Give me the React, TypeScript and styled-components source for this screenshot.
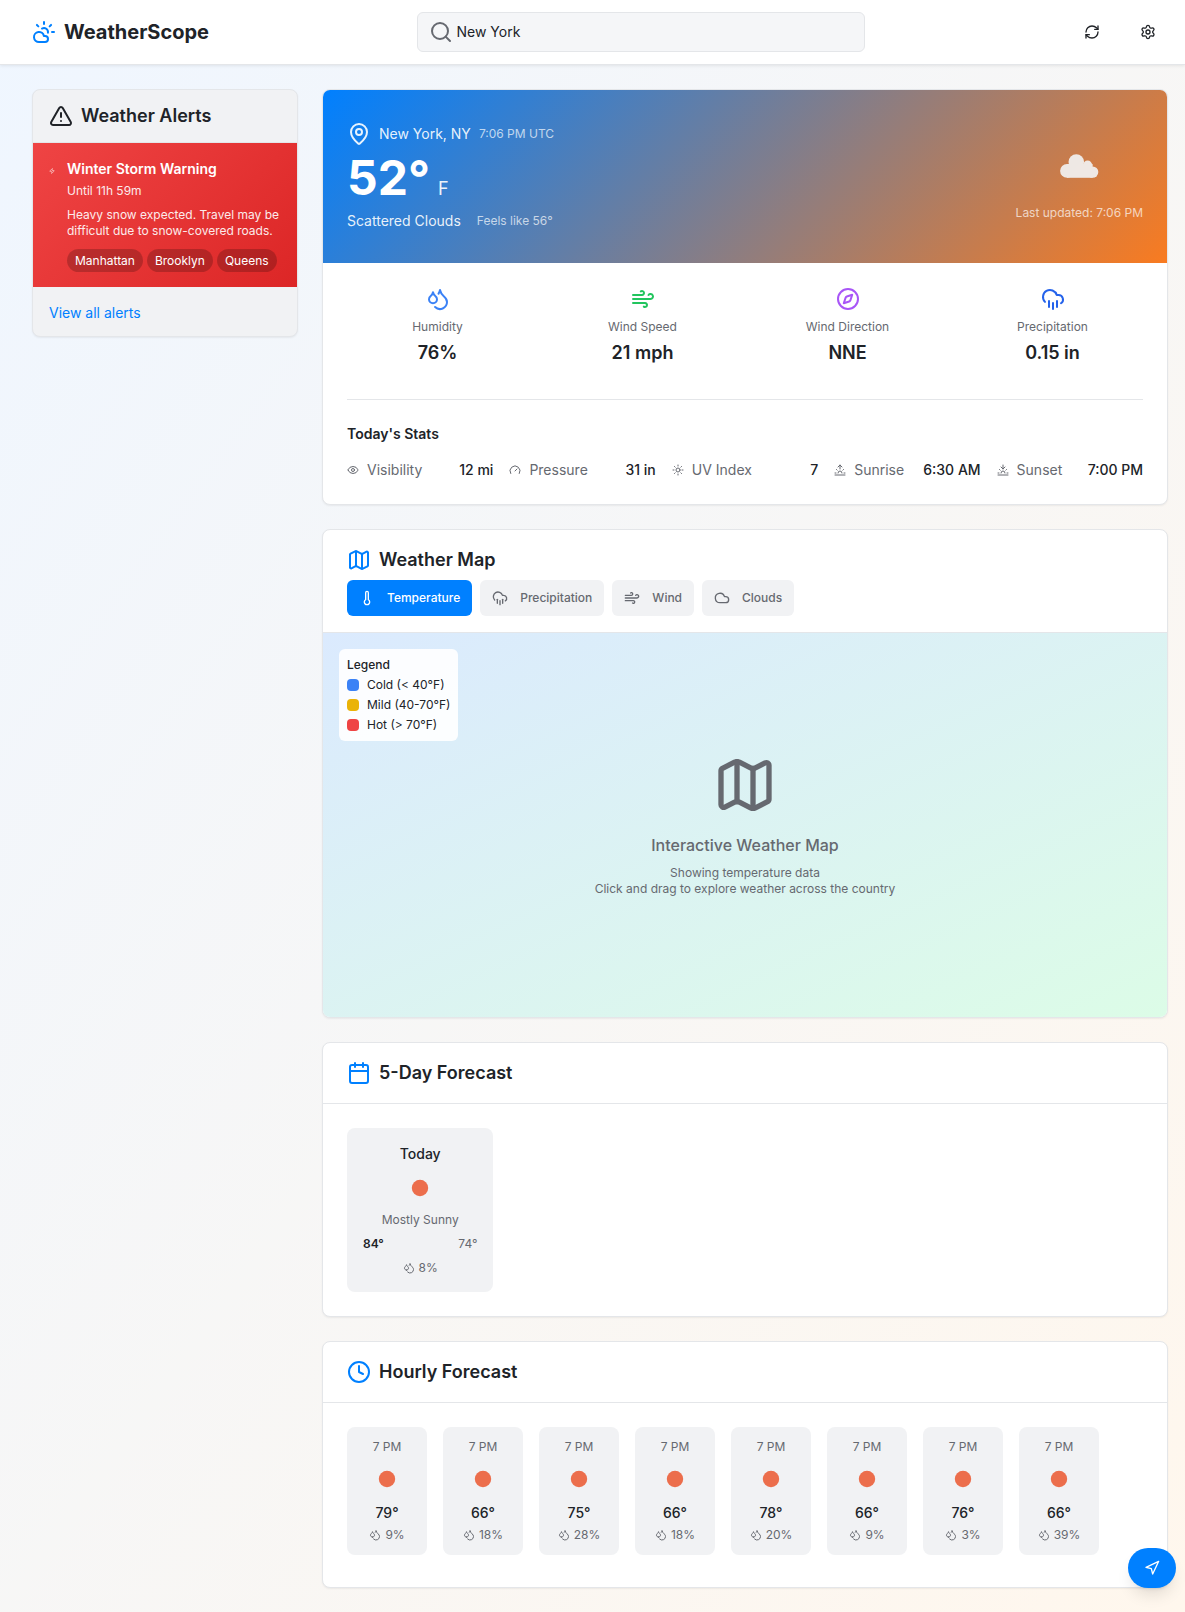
import React from "react";
import styled, { createGlobalStyle } from "styled-components";
import {
  Calendar,
  Clock,
  Cloud,
  CloudRain,
  CloudSun,
  Compass,
  Droplets,
  Eye,
  Gauge,
  Map as MapIcon,
  MapPin,
  Navigation,
  RefreshCw,
  Search,
  Settings,
  Sun,
  Sunrise,
  Sunset,
  Thermometer,
  TriangleAlert,
  Wind,
  Zap,
} from "lucide-react";

const color = {
  text: "#202328",
  muted: "#666970",
  primary: "#0080ff",
  border: "#e4e6e9",
  panel: "#f1f2f4",
  field: "#f5f6f8",
};

const GlobalStyle = createGlobalStyle`
  *, *::before, *::after { box-sizing: border-box; }
  body {
    margin: 0;
    font-family: Inter, "Liberation Sans", sans-serif;
    font-size: 14px;
    line-height: 20px;
    color: ${color.text};
  }
  h1, h2, h3, p, ul, dl, dd { margin: 0; padding: 0; }
  ul { list-style: none; }
  button, input { font: inherit; color: inherit; }
  svg { display: block; flex-shrink: 0; }
`;

const Page = styled.div`
  min-height: 100vh;
  background: linear-gradient(to bottom right, #eff6ff, #fff7ed);
  background-color: #fff;
`;

const Header = styled.header`
  display: flex;
  align-items: center;
  justify-content: space-between;
  padding: 12px 17px 12px 32px;
  background: #fff;
  border-bottom: 1px solid ${color.border};
  box-shadow: 0 1px 3px rgba(0, 0, 0, 0.08);
`;

const Brand = styled.div`
  display: flex;
  align-items: center;
  gap: 8px;
  svg { color: ${color.primary}; }
`;

const BrandName = styled.h1`
  font-size: 20px;
  line-height: 28px;
  font-weight: 700;
`;

const SearchBox = styled.label`
  display: flex;
  align-items: center;
  gap: 4px;
  flex: 1;
  max-width: 448px;
  height: 40px;
  padding: 0 11px;
  border: 1px solid ${color.border};
  border-radius: 6px;
  background: ${color.field};
  svg { color: ${color.muted}; }
`;

const SearchInput = styled.input`
  flex: 1;
  min-width: 0;
  padding: 0;
  border: 0;
  outline: 0;
  background: transparent;
`;

const Actions = styled.div`
  display: flex;
  gap: 16px;
`;

const IconButton = styled.button`
  display: grid;
  place-items: center;
  width: 40px;
  height: 40px;
  padding: 0;
  border: 0;
  border-radius: 6px;
  background: transparent;
  cursor: pointer;
`;

const Layout = styled.main`
  display: grid;
  grid-template-columns: repeat(4, minmax(0, 1fr));
  gap: 24px;
  align-items: start;
  padding: 24px 17px 24px 32px;
`;

const Content = styled.div`
  grid-column: span 3;
  display: flex;
  flex-direction: column;
  gap: 24px;
`;

const Card = styled.section<{ $tone?: string }>`
  overflow: hidden;
  border: 1px solid ${color.border};
  border-radius: 8px;
  background: ${(p) => p.$tone || "#fff"};
  box-shadow: 0 1px 2px rgba(0, 0, 0, 0.06);
`;

const CardHeader = styled.header`
  display: flex;
  flex-direction: column;
  gap: 6px;
  padding: 16px 24px;
  border-bottom: 1px solid ${color.border};
`;

const CardTitle = styled.h2<{ $plain?: boolean }>`
  display: flex;
  align-items: center;
  gap: 8px;
  font-size: 18px;
  line-height: 28px;
  font-weight: 600;
  svg { color: ${(p) => (p.$plain ? "inherit" : color.primary)}; }
`;

const CardBody = styled.div`
  padding: 24px;
`;

/* Alerts */

const AlertsHeader = styled.header`
  padding: 12px 16px;
  border-bottom: 1px solid ${color.border};
`;

const Alert = styled.article`
  display: flex;
  gap: 12px;
  padding: 16px 16px 15px;
  color: #fff;
  background: linear-gradient(135deg, #ef4444, #dc2626);
`;

const AlertMark = styled.span`
  display: grid;
  place-items: center;
  width: 6px;
  height: 24px;
`;

const AlertTitle = styled.h3`
  font-size: 14px;
  line-height: 20px;
  font-weight: 600;
`;

const AlertTime = styled.p`
  margin-top: 4px;
  font-size: 12px;
  line-height: 16px;
  opacity: 0.9;
`;

const AlertText = styled(AlertTime)`
  margin-top: 8px;
`;

const Areas = styled.ul`
  display: flex;
  flex-wrap: wrap;
  gap: 4px;
  margin-top: 10px;
`;

const Area = styled.li`
  padding: 4px 8px;
  border-radius: 12px;
  font-size: 12px;
  line-height: 15px;
  background: rgba(0, 0, 0, 0.2);
`;

const AlertsFooter = styled.footer`
  padding: 16px 16px 13px;
`;

const TextLink = styled.a`
  display: inline-block;
  color: ${color.primary};
  text-decoration: none;
`;

/* Current conditions */

const Hero = styled.div`
  display: flex;
  align-items: center;
  justify-content: space-between;
  padding: 32px 24px 31px;
  color: #fff;
  background: linear-gradient(135deg, #0080ff, #f97b20);
`;

const HeroPlace = styled.div`
  display: flex;
  align-items: center;
  gap: 8px;
  line-height: 24px;
  color: rgba(255, 255, 255, 0.9);
`;

const HeroTemp = styled.div`
  display: flex;
  align-items: baseline;
  gap: 8px;
  margin: 8px 0;
  font-size: 48px;
  line-height: 48px;
  font-weight: 700;
`;

const HeroUnit = styled.span`
  font-size: 18px;
  line-height: 20px;
  font-weight: 400;
  opacity: 0.9;
`;

const HeroSummary = styled.div`
  display: flex;
  align-items: center;
  gap: 16px;
  line-height: 22px;
  color: rgba(255, 255, 255, 0.9);
`;

const HeroNote = styled.span`
  font-size: 12px;
  line-height: 16px;
  color: rgba(255, 255, 255, 0.7);
`;

const HeroAside = styled.div`
  display: flex;
  flex-direction: column;
  align-items: center;
  gap: 8px;
`;

const Metrics = styled.dl`
  display: grid;
  grid-template-columns: repeat(4, minmax(0, 1fr));
  gap: 24px;
`;

const Metric = styled.div<{ $tint: string }>`
  display: flex;
  flex-direction: column;
  align-items: center;
  svg { margin-bottom: 8px; color: ${(p) => p.$tint}; }
`;

const MetricLabel = styled.dt`
  font-size: 12px;
  line-height: 16px;
  color: ${color.muted};
`;

const MetricValue = styled.dd`
  margin-top: 4px;
  font-size: 18px;
  line-height: 28px;
  font-weight: 600;
`;

const StatsSection = styled.div`
  margin-top: 32px;
  padding-top: 24px;
  border-top: 1px solid ${color.border};
`;

const StatsTitle = styled.h3`
  margin-bottom: 16px;
  font-size: 14px;
  line-height: 20px;
  font-weight: 600;
`;

const Stats = styled.dl`
  display: grid;
  grid-template-columns: repeat(5, minmax(0, 1fr));
  gap: 16px;
`;

const Stat = styled.div`
  display: flex;
  align-items: center;
  justify-content: space-between;
`;

const StatLabel = styled.dt`
  display: flex;
  align-items: center;
  gap: 8px;
  color: ${color.muted};
`;

const StatValue = styled.dd`
  font-weight: 500;
  white-space: nowrap;
`;

/* Map */

const Tabs = styled.div`
  display: flex;
  flex-wrap: wrap;
  gap: 8px;
`;

const Tab = styled.button<{ $active?: boolean }>`
  display: flex;
  align-items: center;
  gap: 12px;
  height: 36px;
  padding: 0 12px;
  border: 0;
  border-radius: 6px;
  font-size: 12px;
  line-height: 16px;
  font-weight: 500;
  cursor: pointer;
  color: ${(p) => (p.$active ? "#fff" : color.muted)};
  background: ${(p) => (p.$active ? color.primary : color.panel)};
`;

const MapArea = styled.div`
  position: relative;
  display: flex;
  flex-direction: column;
  align-items: center;
  justify-content: center;
  height: 384px;
  text-align: center;
  color: ${color.muted};
  background: linear-gradient(to bottom right, #dbeafe, #dcfce7);
`;

const MapHeading = styled.h3`
  margin: 16px 0 8px;
  font-size: 16px;
  line-height: 24px;
  font-weight: 500;
`;

const MapText = styled.p`
  font-size: 12px;
  line-height: 16px;
`;

const Legend = styled.div`
  position: absolute;
  top: 16px;
  left: 16px;
  padding: 8px;
  border-radius: 6px;
  font-size: 12px;
  line-height: 16px;
  text-align: left;
  color: ${color.text};
  background: rgba(255, 255, 255, 0.9);
`;

const LegendTitle = styled.div`
  font-weight: 500;
`;

const LegendItem = styled.li<{ $tint: string }>`
  display: flex;
  align-items: center;
  gap: 8px;
  margin-top: 4px;
  &::before {
    content: "";
    width: 12px;
    height: 12px;
    border-radius: 4px;
    background: ${(p) => p.$tint};
  }
`;

/* Forecasts */

const DayGrid = styled.div`
  display: grid;
  grid-template-columns: repeat(5, minmax(0, 1fr));
  gap: 16px;
`;

const HourStrip = styled.div`
  display: flex;
  gap: 16px;
  padding-bottom: 8px;
  overflow-x: auto;
`;

const Tile = styled.article`
  display: flex;
  flex-direction: column;
  align-items: center;
  border-radius: 8px;
  font-size: 12px;
  line-height: 16px;
  color: ${color.muted};
  background: ${color.panel};
`;

const DayTile = styled(Tile)`
  gap: 8px;
  padding: 16px;
`;

const HourTile = styled(Tile)`
  flex: 0 0 80px;
  padding: 12px;
  svg[data-sky] { margin: 8px 0; }
`;

const TileStrong = styled.div`
  font-size: 14px;
  line-height: 20px;
  font-weight: 500;
  color: ${color.text};
`;

const HourTemp = styled(TileStrong)`
  margin-bottom: 4px;
`;

const Range = styled.div`
  display: flex;
  justify-content: space-between;
  align-self: stretch;
`;

const High = styled.span`
  font-weight: 600;
  color: ${color.text};
`;

const Chance = styled.div`
  display: flex;
  align-items: center;
  gap: 4px;
`;

const LocateButton = styled.button`
  position: fixed;
  right: 9px;
  bottom: 24px;
  display: grid;
  place-items: center;
  width: 48px;
  height: 40px;
  padding: 0;
  border: 0;
  border-radius: 20px;
  color: #fff;
  background: ${color.primary};
  box-shadow: 0 10px 15px -3px rgba(0, 0, 0, 0.1), 0 4px 6px -4px rgba(0, 0, 0, 0.1);
  cursor: pointer;
`;

const CloudGlyph = () => (
  <svg width="64" height="64" viewBox="0 0 64 64" aria-hidden="true">
    <g fill="#f2f2f2" opacity="0.92">
      <circle cx="29.3" cy="29" r="7.8" />
      <circle cx="40.6" cy="32.2" r="4.6" />
      <circle cx="20" cy="37.9" r="6.9" />
      <circle cx="45.6" cy="39.1" r="5.7" />
      <rect x="20" y="31" width="25.6" height="13.8" />
    </g>
  </svg>
);

const SunGlyph = () => (
  <svg data-sky="" width="32" height="32" viewBox="0 0 32 32" aria-hidden="true">
    <circle cx="16" cy="16" r="8.2" fill="#ec6e4c" />
  </svg>
);

const metrics = [
  { label: "Humidity", value: "76%", Icon: Droplets, tint: "#3b82f6" },
  { label: "Wind Speed", value: "21 mph", Icon: Wind, tint: "#22c55e" },
  { label: "Wind Direction", value: "NNE", Icon: Compass, tint: "#a855f7" },
  { label: "Precipitation", value: "0.15 in", Icon: CloudRain, tint: "#2563eb" },
];

const stats = [
  { label: "Visibility", value: "12 mi", Icon: Eye },
  { label: "Pressure", value: "31 in", Icon: Gauge },
  { label: "UV Index", value: "7", Icon: Sun },
  { label: "Sunrise", value: "6:30 AM", Icon: Sunrise },
  { label: "Sunset", value: "7:00 PM", Icon: Sunset },
];

const layers = [
  { label: "Temperature", Icon: Thermometer },
  { label: "Precipitation", Icon: CloudRain },
  { label: "Wind", Icon: Wind },
  { label: "Clouds", Icon: Cloud },
];

const legend = [
  { label: "Cold (< 40°F)", tint: "#3b82f6" },
  { label: "Mild (40-70°F)", tint: "#eab308" },
  { label: "Hot (> 70°F)", tint: "#ef4444" },
];

const hours = [
  { temp: 79, rain: 9 },
  { temp: 66, rain: 18 },
  { temp: 75, rain: 28 },
  { temp: 66, rain: 18 },
  { temp: 78, rain: 20 },
  { temp: 66, rain: 9 },
  { temp: 76, rain: 3 },
  { temp: 66, rain: 39 },
];

export default function App() {
  const [layer, setLayer] = React.useState("Temperature");

  return (
    <Page>
      <GlobalStyle />
      <Header>
        <Brand>
          <CloudSun size={24} />
          <BrandName>WeatherScope</BrandName>
        </Brand>
        <SearchBox>
          <Search size={24} />
          <SearchInput type="text" defaultValue="New York" aria-label="Search location" />
        </SearchBox>
        <Actions>
          <IconButton type="button" aria-label="Refresh">
            <RefreshCw size={16} />
          </IconButton>
          <IconButton type="button" aria-label="Settings">
            <Settings size={16} />
          </IconButton>
        </Actions>
      </Header>

      <Layout>
        <Card as="aside" $tone={color.panel}>
          <AlertsHeader>
            <CardTitle $plain>
              <TriangleAlert size={24} />
              Weather Alerts
            </CardTitle>
          </AlertsHeader>
          <Alert>
            <AlertMark>
              <Zap size={6} />
            </AlertMark>
            <div>
              <AlertTitle>Winter Storm Warning</AlertTitle>
              <AlertTime>Until 11h 59m</AlertTime>
              <AlertText>Heavy snow expected. Travel may be difficult due to snow-covered roads.</AlertText>
              <Areas>
                {["Manhattan", "Brooklyn", "Queens"].map((name) => (
                  <Area key={name}>{name}</Area>
                ))}
              </Areas>
            </div>
          </Alert>
          <AlertsFooter>
            <TextLink href="#alerts">View all alerts</TextLink>
          </AlertsFooter>
        </Card>

        <Content>
          <Card>
            <Hero>
              <div>
                <HeroPlace>
                  <MapPin size={24} />
                  <span>New York, NY</span>
                  <HeroNote>7:06 PM UTC</HeroNote>
                </HeroPlace>
                <HeroTemp>
                  <span>52°</span>
                  <HeroUnit>F</HeroUnit>
                </HeroTemp>
                <HeroSummary>
                  <span>Scattered Clouds</span>
                  <HeroNote>Feels like 56°</HeroNote>
                </HeroSummary>
              </div>
              <HeroAside>
                <CloudGlyph />
                <HeroNote>Last updated: 7:06 PM</HeroNote>
              </HeroAside>
            </Hero>
            <CardBody>
              <Metrics>
                {metrics.map(({ label, value, Icon, tint }) => (
                  <Metric key={label} $tint={tint}>
                    <Icon size={24} />
                    <MetricLabel>{label}</MetricLabel>
                    <MetricValue>{value}</MetricValue>
                  </Metric>
                ))}
              </Metrics>
              <StatsSection>
                <StatsTitle>Today's Stats</StatsTitle>
                <Stats>
                  {stats.map(({ label, value, Icon }) => (
                    <Stat key={label}>
                      <StatLabel>
                        <Icon size={12} />
                        {label}
                      </StatLabel>
                      <StatValue>{value}</StatValue>
                    </Stat>
                  ))}
                </Stats>
              </StatsSection>
            </CardBody>
          </Card>

          <Card>
            <CardHeader>
              <CardTitle>
                <MapIcon size={24} />
                Weather Map
              </CardTitle>
              <Tabs>
                {layers.map(({ label, Icon }) => (
                  <Tab
                    key={label}
                    type="button"
                    $active={layer === label}
                    aria-pressed={layer === label}
                    onClick={() => setLayer(label)}
                  >
                    <Icon size={16} />
                    {label}
                  </Tab>
                ))}
              </Tabs>
            </CardHeader>
            <MapArea>
              <MapIcon size={64} />
              <MapHeading>Interactive Weather Map</MapHeading>
              <MapText>Showing {layer.toLowerCase()} data</MapText>
              <MapText>Click and drag to explore weather across the country</MapText>
              <Legend>
                <LegendTitle>Legend</LegendTitle>
                <ul>
                  {legend.map(({ label, tint }) => (
                    <LegendItem key={label} $tint={tint}>
                      {label}
                    </LegendItem>
                  ))}
                </ul>
              </Legend>
            </MapArea>
          </Card>

          <Card>
            <CardHeader>
              <CardTitle>
                <Calendar size={24} />
                5-Day Forecast
              </CardTitle>
            </CardHeader>
            <CardBody>
              <DayGrid>
                <DayTile>
                  <TileStrong>Today</TileStrong>
                  <SunGlyph />
                  <div>Mostly Sunny</div>
                  <Range>
                    <High>84°</High>
                    <span>74°</span>
                  </Range>
                  <Chance>
                    <Droplets size={12} />
                    8%
                  </Chance>
                </DayTile>
              </DayGrid>
            </CardBody>
          </Card>

          <Card>
            <CardHeader>
              <CardTitle>
                <Clock size={24} />
                Hourly Forecast
              </CardTitle>
            </CardHeader>
            <CardBody>
              <HourStrip>
                {hours.map(({ temp, rain }, i) => (
                  <HourTile key={i}>
                    <div>7 PM</div>
                    <SunGlyph />
                    <HourTemp>{temp}°</HourTemp>
                    <Chance>
                      <Droplets size={12} />
                      {rain}%
                    </Chance>
                  </HourTile>
                ))}
              </HourStrip>
            </CardBody>
          </Card>
        </Content>
      </Layout>

      <LocateButton type="button" aria-label="Use my location">
        <Navigation size={16} />
      </LocateButton>
    </Page>
  );
}
